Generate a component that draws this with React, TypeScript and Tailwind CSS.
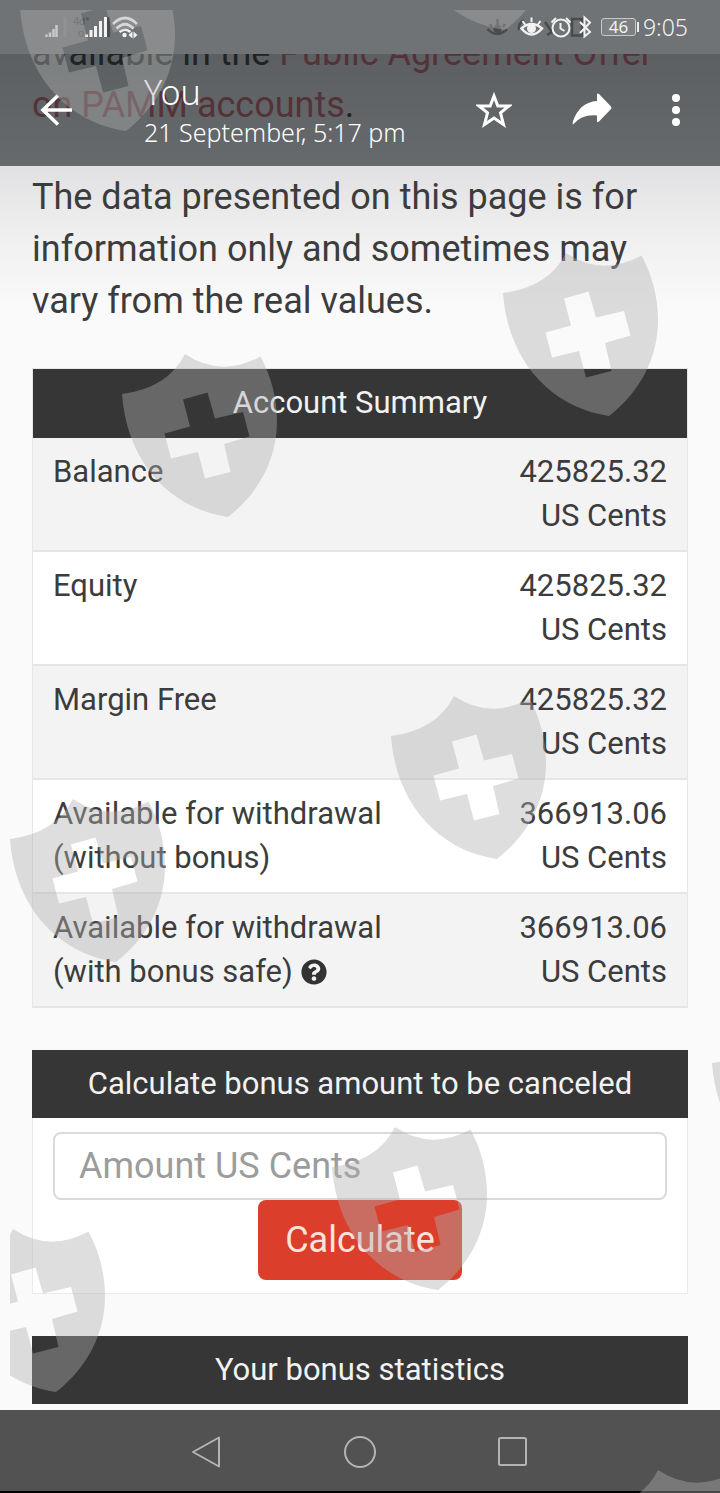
import React, { useState } from 'react';
import { FaQuestionCircle } from 'react-icons/fa';

const rows = [
  { label: ['Balance'], value: '425825.32' },
  { label: ['Equity'], value: '425825.32' },
  { label: ['Margin Free'], value: '425825.32' },
  { label: ['Available for withdrawal', '(without bonus)'], value: '366913.06' },
  { label: ['Available for withdrawal', '(with bonus safe)'], value: '366913.06', help: true },
];

// scattered over the whole screen, left/top of each shield
const shields = [
  { left: 20, top: -32 },
  { left: 399, top: -133 },
  { left: 503, top: 253 },
  { left: 122, top: 354 },
  { left: 391, top: 696 },
  { left: 10, top: 799 },
  { left: 712, top: 1023 },
  { left: 332, top: 1127 },
  { left: -50, top: 1229 },
  { left: 595, top: 1470 },
];

function Shield({ left, top }: { left: number; top: number }) {
  return (
    <svg
      className="absolute h-[163px] w-[156px] max-w-none text-[#afafaf]/41"
      style={{ left: left - 10, top: top - 10 }}
      viewBox="0 0 156 163"
      fill="currentColor"
      fillRule="evenodd"
    >
      <path d="M0 40Q46 34 63 0Q99 24 138.500 2.500C149 22 155 44 155 67C155 105 137 139 106 163C50 155 5 110 0 40ZM61 45.500L85.500 38.500L93 64.500L121 58L127.500 82.500L102 90L108.500 118L83 124.500L76 98L49 104.500L42.500 79.500L68 72.500Z" />
    </svg>
  );
}

function StatusBar() {
  return (
    <div className="relative flex h-[54px] items-center justify-between bg-[#6f7376] pr-8 pl-11 text-[#f2f2f2]">
      <svg className="h-6 w-24" viewBox="44 15 96 24" fill="none" stroke="currentColor">
        <path stroke="#7b7f81" strokeWidth="3" d="M65 17V37" />
        <path stroke="#dcdcdc" strokeWidth="2.500" d="M46.500 37V34.500M50 37V32.500M53.500 37V29M56.500 37V25" />
        <g fill="#4d5153" stroke="none" fontSize="11" fontFamily="Liberation Sans">
          <text x="73" y="25">4d*</text>
          <text x="78" y="37">o</text>
        </g>
        <path stroke="#484c4e" strokeWidth="3" d="M108.500 17V37" />
        <path strokeWidth="3" d="M86.500 37V34.500M91 37V30M95.500 37V26M100.500 37V21M105.500 37V17" />
        <path strokeWidth="2.600" d="M113 24Q125 12 137 24M116.500 28.500Q125 20 133.500 28.500M119.500 32Q125 27.500 130.500 32" />
        <circle cx="124.500" cy="35" r="2.200" fill="currentColor" stroke="none" />
        <path fill="currentColor" stroke="none" d="M128.500 35L132.500 31.500V38.500ZM137.500 35L133.500 31.500V38.500Z" />
      </svg>
      <div className="flex items-center">
        <svg className="mr-2 h-6 w-[108px]" viewBox="482 15 108 24" fill="none" stroke="currentColor">
          {/* shadows of the icons below */}
          <g stroke="#484c4e" strokeWidth="2.500">
            <path d="M484.500 29Q494 39 504 29M487 24L489 27M494.500 19V25M502 24L500 27" />
            <circle cx="494.500" cy="29" r="4" fill="#484c4e" stroke="none" />
            <path d="M516 30Q515 23 521 20M542 22L549 32L544 35M569 19H579V35.500H569Z" />
          </g>
          <g strokeWidth="2">
            <path strokeWidth="2.500" d="M518.500 28.500Q528.500 19.500 539 28.500Q528.500 40.500 518.500 28.500Z" />
            <path d="M519.500 21L522.500 25M528.500 17.500V22M537.500 21L534.500 25" />
            <circle cx="528.500" cy="28.500" r="4.500" fill="currentColor" stroke="none" />
            <circle cx="558" cy="28" r="8.500" />
            <path d="M557.500 23V28.500L561.500 31M548.500 22.500L553 18M567.500 22.500L563 18" />
            <path d="M577 22L587 32L581.500 36.500V17.500L587 22.500L577 33" />
          </g>
        </svg>
        <span className="flex h-[18px] w-[35px] items-center justify-center rounded-[3px] border border-[#c8c8c8] bg-[#7d8082] font-['Noto_Sans',sans-serif] text-[17px] leading-4">
          46
        </span>
        <span className="ml-px h-2.5 w-[2px] bg-[#ededed]" />
        <span className="ml-1 font-['Noto_Sans',sans-serif] text-[23px] leading-7 font-light">9:05</span>
      </div>
    </div>
  );
}

function ViewerHeader() {
  return (
    <header className="absolute inset-x-0 top-0">
      <StatusBar />
      <div className="flex h-28 items-center bg-[#080f12]/57 px-10 text-white">
        <button type="button" aria-label="Back">
          <svg className="h-8 w-8" viewBox="0 0 32 32" fill="none" stroke="currentColor" strokeWidth="3.500">
            <path d="M18 1.500L3 16L18 30.500M3 16H32" />
          </svg>
        </button>
        <div className="ml-[72px] flex-1 pt-1 font-['Noto_Sans',sans-serif] font-light">
          <h1 className="text-[34px] leading-10">You</h1>
          <p className="text-[25px] leading-10">21 September, 5:17 pm</p>
        </div>
        <div className="flex items-center gap-[60px]">
          <button type="button" aria-label="Star">
            <svg className="h-9 w-9" viewBox="0 0 36 36" fill="none" stroke="currentColor" strokeWidth="3">
              <path d="M18 4L21.800 14H33L24.500 20.800L27.500 32.500L18 26L8.500 32.500L11.500 20.800L3 14H14.200Z" />
            </svg>
          </button>
          <button type="button" aria-label="Forward">
            <svg className="h-9 w-10" viewBox="0 0 40 36" fill="currentColor">
              <path d="M25 2.500Q25 1 27 2L39 14.500Q40 16 39 17L27 29.500Q25 31 25 29V23.500Q10 22 1 32.500Q0 32 1 29Q8 10 25 9Z" />
            </svg>
          </button>
          <button type="button" aria-label="More options">
            <svg className="h-9 w-2" viewBox="0 0 8 36" fill="currentColor">
              <circle cx="4" cy="6" r="4" />
              <circle cx="4" cy="18" r="4" />
              <circle cx="4" cy="30" r="4" />
            </svg>
          </button>
        </div>
      </div>
    </header>
  );
}

export default function App() {
  const [amount, setAmount] = useState('');

  const handleSubmit = (e: React.FormEvent) => {
    e.preventDefault();
  };

  return (
    <div className="relative overflow-hidden bg-[#fafafa] font-[Roboto,sans-serif] text-[#3c3c3c]">
      <main className="bg-[linear-gradient(#c9c9cc_54px,#e1e1e3_166px,#f0f0f0_240px,#fafafa_310px)] px-8 pt-[27px] pb-1.5">
        <div className="text-[36px] leading-[52px]">
          <p>
            available in the{' '}
            <a href="#offer" className="text-[#b8606c]">
              Public Agreement Offer
              <br />
              on PAMM accounts
            </a>
            .
          </p>
          <p className="mt-10">
            The data presented on this page is for information only and sometimes may vary from the real values.
          </p>
        </div>

        {/* Account summary */}
        <table className="mt-[41px] w-full border-collapse border border-[#e6e6e6] text-[31px] leading-[44px]">
          <thead>
            <tr>
              <th colSpan={2} className="h-[69px] bg-[#363636] font-normal text-[#f2f2f2]">
                Account Summary
              </th>
            </tr>
          </thead>
          <tbody>
            {rows.map((row, i) => (
              <tr key={i} className="border-b-2 border-[#e6e6e6] odd:bg-[#f3f3f3] even:bg-white">
                <td className="px-5 py-3 align-top">
                  {row.label[0]}
                  {row.label[1] && <br />}
                  {row.label[1]}
                  {row.help && (
                    <FaQuestionCircle className="ml-2 inline-block h-[26px] w-[26px] align-[-3px] text-[#333]" />
                  )}
                </td>
                <td className="px-5 py-3 text-right align-top">
                  {row.value}
                  <br />
                  US Cents
                </td>
              </tr>
            ))}
          </tbody>
        </table>

        {/* Bonus calculator */}
        <section className="mt-[42px] border border-[#ebebeb] bg-white text-[31px]">
          <h2 className="-mx-px -mt-px bg-[#363636] py-3 text-center leading-[44px] text-[#f2f2f2]">
            Calculate bonus amount to be canceled
          </h2>
          <form className="flex flex-col items-center px-5 pt-[14px] pb-[13px]" onSubmit={handleSubmit}>
            <input
              type="text"
              aria-label="Amount US Cents"
              placeholder="Amount US Cents"
              value={amount}
              onChange={(e) => setAmount(e.target.value)}
              className="h-[68px] w-full rounded-lg border-2 border-[#dadada] bg-white px-6 text-[36px] outline-none placeholder:text-[#9c9c9c]"
            />
            <button type="submit" className="h-20 rounded-lg bg-[#db3e2b] px-[27px] text-[36px] text-[#fbe3dc]">
              Calculate
            </button>
          </form>
        </section>

        <section className="mt-[42px] text-[31px]">
          <h2 className="bg-[#363636] py-3 text-center leading-[44px] text-[#f2f2f2]">Your bonus statistics</h2>
        </section>
      </main>

      <nav className="flex h-[83px] items-center justify-center gap-[121px] border-b-2 border-black bg-[#525252] pt-1 text-[#b4b4b4]">
        <button type="button" aria-label="Back">
          <svg className="h-8 w-8" viewBox="0 0 32 32" fill="none" stroke="currentColor" strokeWidth="2" strokeLinejoin="round">
            <path d="M28 1.500V30.500L2 16Z" />
          </svg>
        </button>
        <button type="button" aria-label="Home">
          <svg className="h-8 w-8" viewBox="0 0 32 32" fill="none" stroke="currentColor" strokeWidth="2">
            <circle cx="16" cy="16" r="15" />
          </svg>
        </button>
        <button type="button" aria-label="Recent apps">
          <svg className="h-8 w-8" viewBox="0 0 32 32" fill="none" stroke="currentColor" strokeWidth="2">
            <rect x="2" y="2" width="27" height="27" rx="1.500" />
          </svg>
        </button>
      </nav>

      <ViewerHeader />

      <div className="pointer-events-none absolute top-2.5 right-0 bottom-0 left-2.5 overflow-hidden" aria-hidden="true">
        {shields.map((shield, i) => (
          <Shield key={i} left={shield.left} top={shield.top} />
        ))}
      </div>
    </div>
  );
}
